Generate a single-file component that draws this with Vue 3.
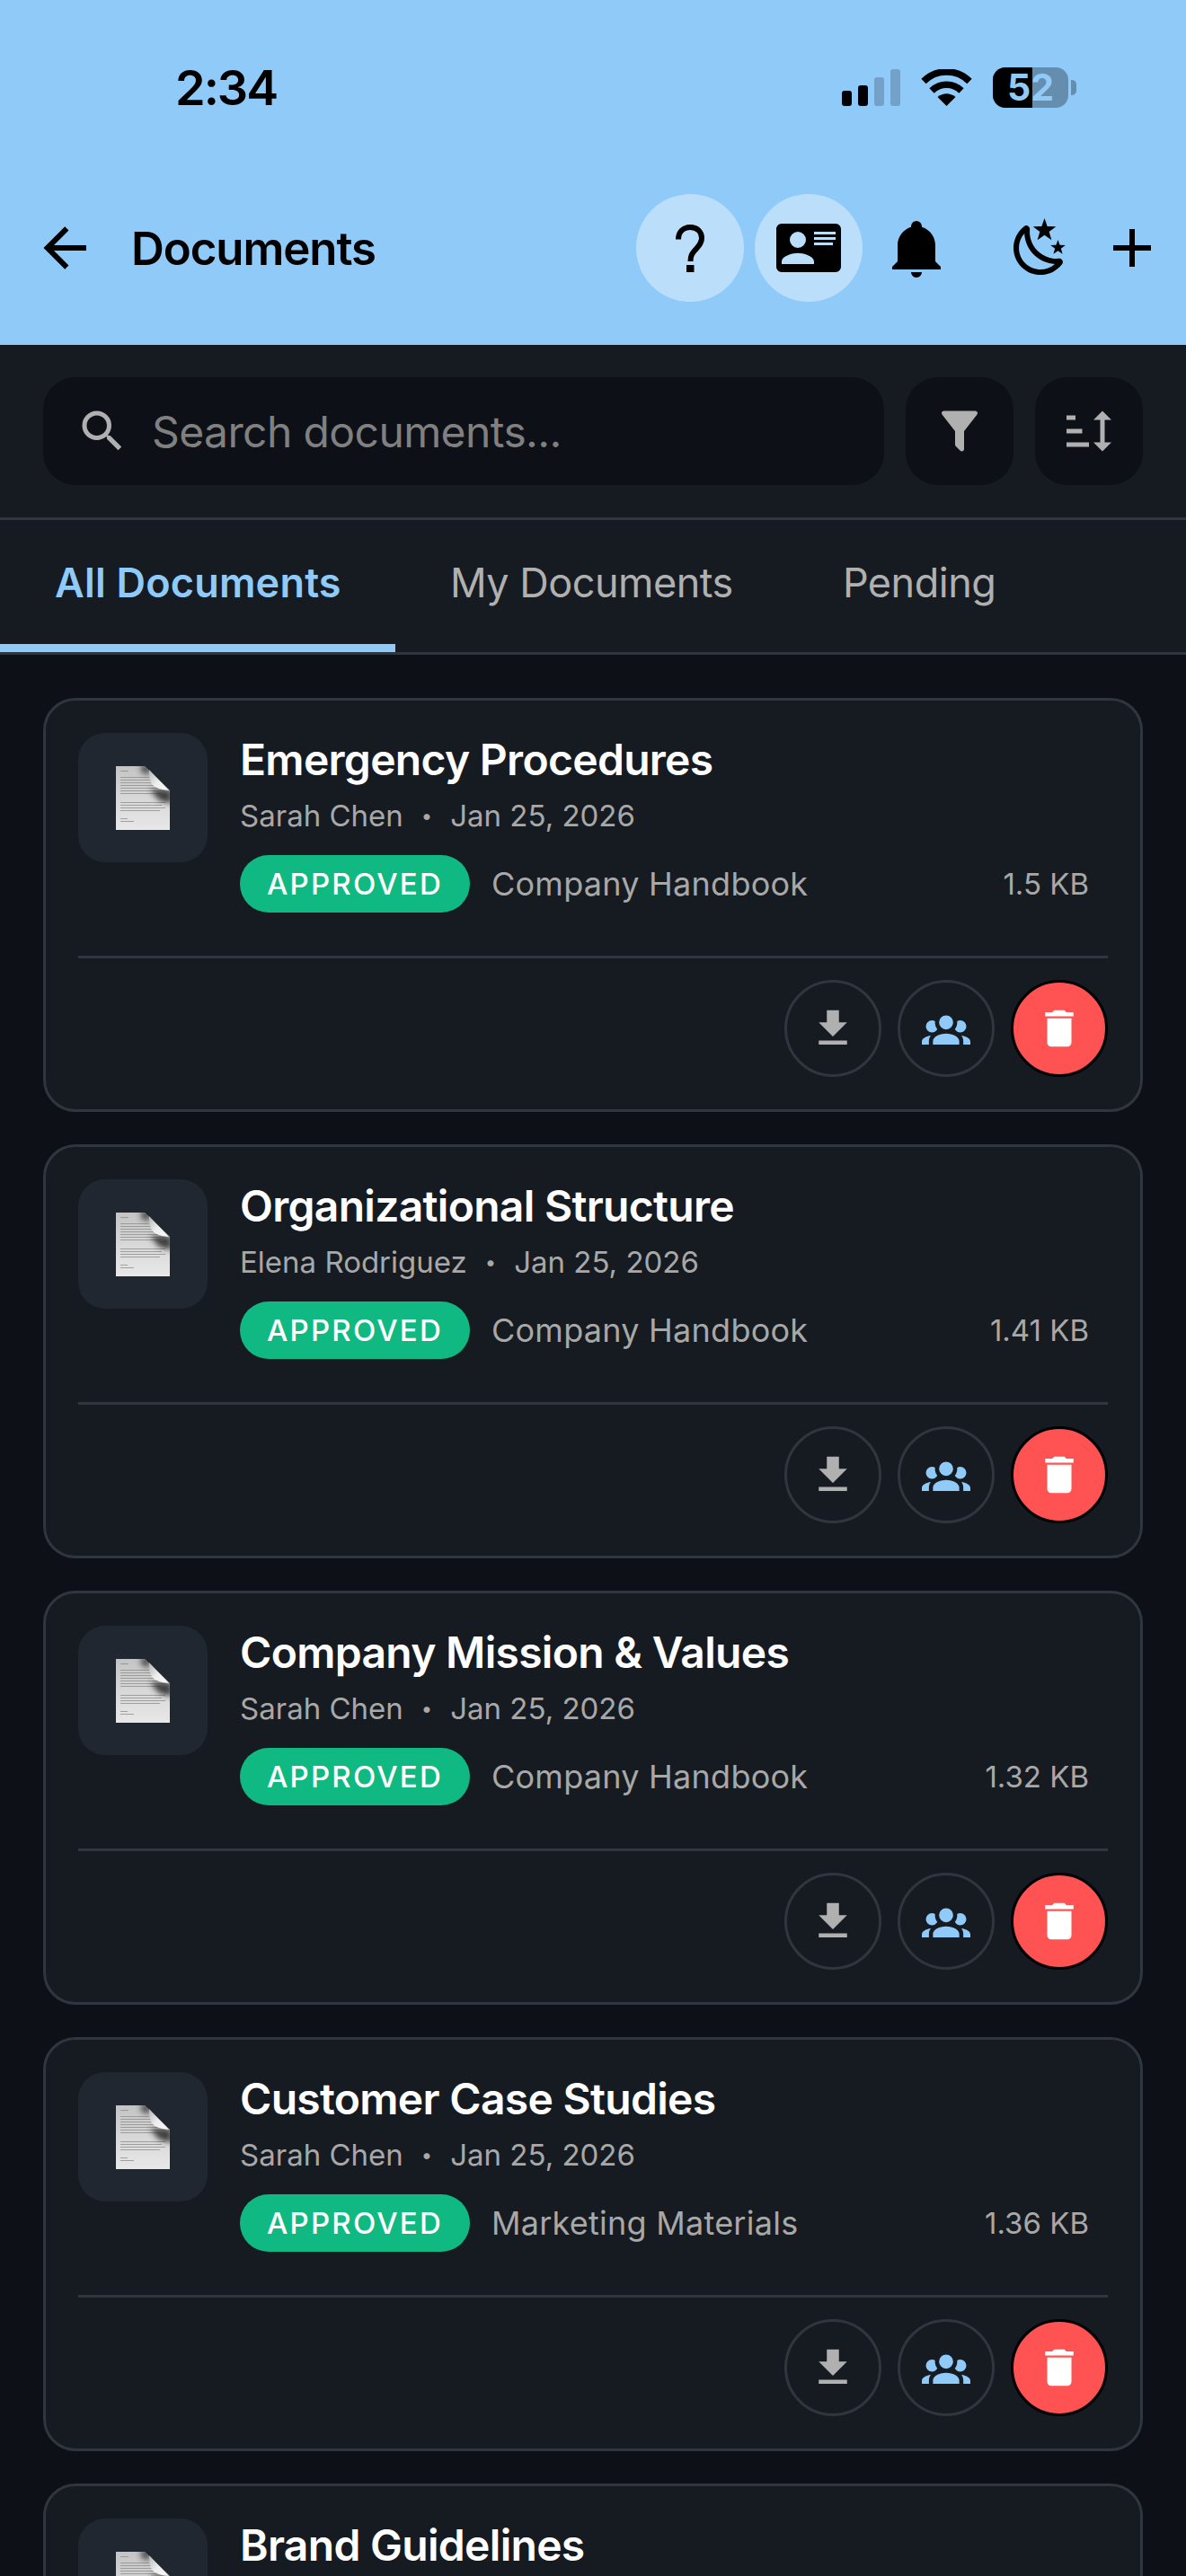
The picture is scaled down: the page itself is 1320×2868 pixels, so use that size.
<template>
  <div class="page">
    <header class="top">
      <div class="status">
        <span class="time">2:34</span>
        <div class="status-right">
          <div class="signal">
            <i class="b1"></i>
            <i class="b2"></i>
            <i class="b3 off"></i>
            <i class="b4 off"></i>
          </div>
          <svg class="wifi" viewBox="0 0 57 41" width="57" height="41">
            <path d="M3 13.5A36 36 0 0 1 54 13.5" fill="none" stroke="#000" stroke-width="7.5" />
            <path d="M12 24A23.5 23.5 0 0 1 45 24" fill="none" stroke="#000" stroke-width="7.5" />
            <path d="M28.5 41L18.5 31Q28.5 23.5 38.5 31Z" fill="#000" />
          </svg>
          <div class="battery">
            <div class="batt-body">
              <span class="batt-fill"></span>
              <span class="batt-text">52</span>
            </div>
            <span class="batt-cap"></span>
          </div>
        </div>
      </div>
      <div class="nav">
        <svg class="ic72" viewBox="0 0 24 24"><path :d="icons.back" /></svg>
        <h1>Documents</h1>
        <button class="round">
          <svg width="32" height="53" viewBox="0 0 32 53">
            <path d="M3 16.5C3 8 8.500 3 16 3C24 3 29 8 29 15C29 21 25.500 24 21.500 28.500C18 32.500 16.500 35 16.500 41" fill="none" stroke="#000" stroke-width="6" />
            <rect x="12" y="45" width="8.500" height="8" />
          </svg>
        </button>
        <button class="round">
          <svg class="ic72" viewBox="0 0 24 24"><path :d="icons.card" /></svg>
        </button>
        <svg class="ic72 bell" viewBox="0 0 24 24"><path :d="icons.bell" /></svg>
        <svg class="ic72 moon" viewBox="0 0 24 24"><path :d="icons.moon" /></svg>
        <svg class="ic72 plus" viewBox="0 0 24 24"><path :d="icons.plus" /></svg>
      </div>
    </header>

    <section class="search-row">
      <div class="search">
        <svg class="ic60" viewBox="0 0 24 24"><path :d="icons.search" /></svg>
        <span>Search documents...</span>
      </div>
      <button class="tool">
        <svg class="ic60" viewBox="0 0 24 24"><path :d="icons.filter" /></svg>
      </button>
      <button class="tool">
        <svg class="ic60" viewBox="0 0 24 24"><path :d="icons.sort" /></svg>
      </button>
    </section>

    <nav class="tabs">
      <div class="tab active">All Documents</div>
      <div class="tab">My Documents</div>
      <div class="tab">Pending</div>
    </nav>

    <main class="list">
      <article class="card" v-for="doc in docs" :key="doc.title">
        <div class="card-top">
          <div class="thumb">
            <svg width="60" height="71" viewBox="0 0 60 71">
              <defs>
                <linearGradient id="pageGrad" x1="0" y1="0" x2="0" y2="1">
                  <stop offset="0" stop-color="#c4c4c4" />
                  <stop offset="0.5" stop-color="#d8d8d8" />
                  <stop offset="1" stop-color="#e8e8e8" />
                </linearGradient>
                <linearGradient id="foldGrad" x1="0" y1="0" x2="1" y2="1">
                  <stop offset="0" stop-color="#b5b5b5" />
                  <stop offset="0.5" stop-color="#ededed" />
                  <stop offset="1" stop-color="#fafafa" />
                </linearGradient>
                <filter id="soft" x="-50%" y="-50%" width="200%" height="200%">
                  <feGaussianBlur stdDeviation="3" />
                </filter>
                <clipPath id="pageClip">
                  <path d="M0 0H32L60 27V71H0Z" />
                </clipPath>
              </defs>
              <path d="M0 0H32L60 27V71H0Z" fill="url(#pageGrad)" />
              <g fill="#8a8a8a" opacity="0.75">
                <rect x="5" y="5" width="9" height="1" />
                <rect v-for="l in lines" :key="l.y" x="5" :y="l.y" :width="l.w" height="1" />
              </g>
              <g clip-path="url(#pageClip)" filter="url(#soft)" fill="#2e2e2e">
                <path d="M28 -2H38V10L28 7Z" opacity="0.8" />
                <path d="M38 26H62V42L48 38Z" opacity="0.9" />
              </g>
              <path d="M37 4L59 27Q45 26 40 20Q37 14 37 4Z" fill="url(#foldGrad)" />
            </svg>
          </div>
          <div class="info">
            <div class="title">{{ doc.title }}</div>
            <div class="meta">
              <span>{{ doc.author }}</span>
              <span class="dot">•</span>
              <span>{{ doc.date }}</span>
            </div>
            <div class="tags">
              <span class="badge">APPROVED</span>
              <span class="cat">{{ doc.category }}</span>
              <span class="size">{{ doc.size }}</span>
            </div>
          </div>
        </div>
        <div class="actions">
          <button class="act">
            <svg class="ic54" viewBox="0 0 24 24"><path :d="icons.download" /></svg>
          </button>
          <button class="act blue">
            <svg class="ic54" viewBox="0 0 24 24"><path :d="icons.group" /></svg>
          </button>
          <button class="act del">
            <svg class="ic54" viewBox="0 0 24 24"><path :d="icons.trash" /></svg>
          </button>
        </div>
      </article>
    </main>
  </div>
</template>

<script setup>
const icons = {
  back: 'M20,11V13H8L13.5,18.5L12.08,19.92L4.16,12L12.08,4.08L13.5,5.5L8,11H20Z',
  card: 'M2,3H22C23.05,3 24,3.95 24,5V19C24,20.05 23.05,21 22,21H2C0.95,21 0,20.05 0,19V5C0,3.95 0.95,3 2,3M14,6V7H22V6H14M14,8V9H21.5L22,9V8H14M14,10V11H21V10H14M8,13.91C6,13.91 2,15 2,17V18H14V17C14,15 10,13.91 8,13.91M8,6A3,3 0 0,0 5,9A3,3 0 0,0 8,12A3,3 0 0,0 11,9A3,3 0 0,0 8,6Z',
  bell: 'M21,19V20H3V19L5,17V11C5,7.9 7.03,5.17 10,4.29C10,4.19 10,4.1 10,4A2,2 0 0,1 12,2A2,2 0 0,1 14,4C14,4.1 14,4.19 14,4.29C16.97,5.17 19,7.9 19,11V17L21,19M14,21A2,2 0 0,1 12,23A2,2 0 0,1 10,21',
  moon: 'M17.75,4.09L15.22,6.03L16.13,9.09L13.5,7.28L10.87,9.09L11.78,6.03L9.25,4.09L12.44,4L13.5,1L14.56,4L17.75,4.09M21.25,11L19.61,12.25L20.2,14.23L18.5,13.06L16.8,14.23L17.39,12.25L15.75,11L17.81,10.95L18.5,9L19.19,10.95L21.25,11M18.97,15.95C19.8,15.87 20.69,17.05 20.16,17.8C19.84,18.25 19.5,18.67 19.08,19.07C15.17,23 8.84,23 4.94,19.07C1.03,15.17 1.03,8.83 4.94,4.93C5.34,4.53 5.76,4.17 6.21,3.85C6.96,3.32 8.14,4.21 8.06,5.04C7.79,7.9 8.75,10.87 10.95,13.06C13.14,15.26 16.1,16.22 18.97,15.95M17.33,17.97C14.5,17.81 11.7,16.64 9.53,14.5C7.36,12.31 6.2,9.5 6.04,6.68C3.23,9.82 3.34,14.64 6.35,17.66C9.37,20.67 14.19,20.78 17.33,17.97Z',
  plus: 'M19,13H13V19H11V13H5V11H11V5H13V11H19V13Z',
  search: 'M9.5,3A6.5,6.5 0 0,1 16,9.5C16,11.11 15.41,12.59 14.44,13.73L14.71,14H15.5L20.5,19L19,20.5L14,15.5V14.71L13.73,14.44C12.59,15.41 11.11,16 9.5,16A6.5,6.5 0 0,1 3,9.5A6.5,6.5 0 0,1 9.5,3M9.5,5C7,5 5,7 5,9.5C5,12 7,14 9.5,14C12,14 14,12 14,9.5C14,7 12,5 9.5,5Z',
  filter: 'M14,12V19.88C14.04,20.18 13.94,20.5 13.71,20.71C13.32,21.1 12.69,21.1 12.3,20.71L10.29,18.7C10.06,18.47 9.96,18.16 10,17.87V12H9.97L4.21,4.62C3.87,4.19 3.95,3.56 4.38,3.22C4.57,3.08 4.78,3 5,3V3H19V3C19.22,3 19.43,3.08 19.62,3.22C20.05,3.56 20.13,4.19 19.79,4.62L14.03,12H14Z',
  sort: 'M18 21L14 17H17V7H14L18 3L22 7H19V17H22M2 19V17H12V19M2 13V11H9V13M2 7V5H6V7H2Z',
  download: 'M5,20H19V18H5M19,9H15V3H9V9H5L12,16L19,9Z',
  group: 'M12,5.5A3.5,3.5 0 0,1 15.5,9A3.5,3.5 0 0,1 12,12.5A3.5,3.5 0 0,1 8.5,9A3.5,3.5 0 0,1 12,5.5M5,8C5.56,8 6.08,8.15 6.53,8.42C6.38,9.85 6.8,11.27 7.66,12.38C7.16,13.34 6.16,14 5,14A3,3 0 0,1 2,11A3,3 0 0,1 5,8M19,8A3,3 0 0,1 22,11A3,3 0 0,1 19,14C17.84,14 16.84,13.34 16.34,12.38C17.2,11.27 17.62,9.85 17.47,8.42C17.92,8.15 18.44,8 19,8M5.5,18.25C5.5,16.18 8.41,14.5 12,14.5C15.59,14.5 18.5,16.18 18.5,18.25V20H5.5V18.25M0,20V18.5C0,17.11 1.89,15.94 4.45,15.6C3.86,16.28 3.5,17.22 3.5,18.25V20H0M24,20H20.5V18.25C20.5,17.22 20.14,16.28 19.55,15.6C22.11,15.94 24,17.11 24,18.5V20Z',
  trash: 'M19,4H15.5L14.5,3H9.5L8.5,4H5V6H19M6,19A2,2 0 0,0 8,21H16A2,2 0 0,0 18,19V7H6V19Z',
}

const docs = [
  { title: 'Emergency Procedures', author: 'Sarah Chen', date: 'Jan 25, 2026', category: 'Company Handbook', size: '1.5 KB' },
  { title: 'Organizational Structure', author: 'Elena Rodriguez', date: 'Jan 25, 2026', category: 'Company Handbook', size: '1.41 KB' },
  { title: 'Company Mission & Values', author: 'Sarah Chen', date: 'Jan 25, 2026', category: 'Company Handbook', size: '1.32 KB' },
  { title: 'Customer Case Studies', author: 'Sarah Chen', date: 'Jan 25, 2026', category: 'Marketing Materials', size: '1.36 KB' },
  { title: 'Brand Guidelines', author: 'Sarah Chen', date: 'Jan 25, 2026', category: 'Marketing Materials', size: '1.4 KB' },
]

// little lines of "writing" on the page icon
const lines = [
  { y: 12, w: 32 }, { y: 15, w: 36 }, { y: 18, w: 38 }, { y: 21, w: 45 }, { y: 24, w: 50 },
  { y: 27, w: 50 }, { y: 30, w: 44 }, { y: 40, w: 50 }, { y: 43, w: 46 }, { y: 46, w: 50 },
  { y: 49, w: 44 }, { y: 58, w: 8 }, { y: 61, w: 15 },
]
</script>

<style scoped>
.page {
  width: 1320px;
  height: 2868px;
  overflow: hidden;
  background: #0d1117;
  font-family: Inter, "Liberation Sans", sans-serif;
  color: #fff;
}
.top {
  height: 384px;
  background: #90caf9;
  color: #000;
}
.status {
  height: 194px;
  margin-bottom: 22px;
  padding: 0 122px 0 195px;
  display: flex;
  align-items: center;
  justify-content: space-between;
  box-sizing: border-box;
}
.time {
  font-size: 54px;
  font-weight: 600;
  letter-spacing: -2px;
}
.status-right {
  display: flex;
  align-items: center;
  gap: 23px;
}
.signal {
  display: flex;
  align-items: flex-end;
  gap: 7px;
  height: 41px;
}
.signal i {
  display: block;
  width: 11px;
  background: #000;
  border-radius: 3px;
}
.signal .b1 { height: 17px; }
.signal .b2 { height: 23px; }
.signal .b3 { height: 32px; }
.signal .b4 { height: 41px; }
.signal .off { background: rgba(0, 0, 0, 0.2); }
.battery {
  display: flex;
  align-items: center;
  gap: 3px;
}
.batt-body {
  position: relative;
  width: 84px;
  height: 45px;
  border-radius: 14px;
  overflow: hidden;
  background: rgba(0, 0, 0, 0.3);
  display: flex;
  align-items: center;
  justify-content: center;
}
.batt-fill {
  position: absolute;
  left: 0;
  top: 0;
  bottom: 0;
  width: 44px;
  background: #000;
}
.batt-text {
  position: relative;
  font-size: 41px;
  line-height: 45px;
  font-weight: 700;
  color: #90caf9;
}
.batt-cap {
  width: 6px;
  height: 17px;
  border-radius: 0 5px 5px 0;
  background: rgba(0, 0, 0, 0.3);
}
.nav {
  height: 120px;
  display: flex;
  align-items: center;
  padding-left: 36px;
}
.nav h1 {
  margin: 0 0 0 38px;
  flex: 1;
  font-size: 51px;
  font-weight: 600;
  letter-spacing: -1.1px;
}
.round {
  width: 120px;
  height: 120px;
  margin-right: 12px;
  padding: 0;
  border: none;
  border-radius: 50%;
  background: #bbdefb;
  display: flex;
  align-items: center;
  justify-content: center;
}
.bell { margin-left: 12px; }
.moon { margin-left: 66px; }
.plus { margin-left: 30px; margin-right: 24px; }
.ic72 { width: 72px; height: 72px; flex: none; }
.ic60 { width: 60px; height: 60px; flex: none; fill: #b0b0b0; }
.ic54 { width: 54px; height: 54px; flex: none; fill: #b0b0b0; }

.search-row {
  box-sizing: border-box;
  height: 195px;
  padding: 36px 48px;
  display: flex;
  gap: 24px;
  background: #161b22;
  border-bottom: 3px solid #30363d;
}
.search {
  flex: 1;
  height: 120px;
  box-sizing: border-box;
  padding-left: 36px;
  display: flex;
  align-items: center;
  gap: 25px;
  background: #0d1117;
  border-radius: 36px;
  font-size: 48px;
  letter-spacing: -0.6px;
  color: #808080;
}
.tool {
  width: 120px;
  height: 120px;
  padding: 0;
  border: none;
  border-radius: 36px;
  background: #0d1117;
  display: flex;
  align-items: center;
  justify-content: center;
}
.tabs {
  height: 150px;
  box-sizing: border-box;
  display: flex;
  background: #161b22;
  border-bottom: 3px solid #30363d;
}
.tab {
  padding: 0 61px;
  height: 147px;
  box-sizing: border-box;
  display: flex;
  align-items: center;
  font-size: 45px;
  letter-spacing: -0.5px;
  color: #b0b0b0;
  border-bottom: 9px solid transparent;
}
.tab.active {
  width: 440px;
  font-weight: 600;
  letter-spacing: 0.2px;
  color: #90caf9;
  border-bottom-color: #90caf9;
  white-space: nowrap;
}
.list {
  padding: 48px 48px 0;
  display: flex;
  flex-direction: column;
  gap: 36px;
}
.card {
  height: 461px;
  flex: none;
  box-sizing: border-box;
  padding: 36px;
  background: #161b22;
  border: 3px solid #30363d;
  border-radius: 36px;
}
.card-top {
  display: flex;
  gap: 36px;
  height: 248px;
  border-bottom: 3px solid #30363d;
}
.thumb {
  width: 144px;
  height: 144px;
  flex: none;
  border-radius: 30px;
  background: #202731;
  display: flex;
  align-items: center;
  justify-content: center;
}
.info {
  flex: 1;
  min-width: 0;
}
.title {
  font-size: 48px;
  font-weight: 600;
  letter-spacing: -0.7px;
  line-height: 60px;
}
.meta {
  margin-top: 11px;
  display: flex;
  align-items: center;
  font-size: 33px;
  line-height: 42px;
  color: #a8a8a8;
}
.dot {
  margin: 0 20px;
  font-size: 22px;
}
.tags {
  margin-top: 23px;
  display: flex;
  align-items: center;
}
.badge {
  height: 64px;
  box-sizing: border-box;
  padding: 0 30px;
  display: flex;
  align-items: center;
  border-radius: 32px;
  background: #10b981;
  color: #fff;
  font-size: 33px;
  font-weight: 500;
  letter-spacing: 2.2px;
}
.cat {
  margin-left: 24px;
  font-size: 36px;
  letter-spacing: 0.25px;
  color: #a8a8a8;
}
.size {
  margin-left: auto;
  margin-right: 21px;
  font-size: 33px;
  color: #a8a8a8;
}
.actions {
  margin-top: 24px;
  display: flex;
  justify-content: flex-end;
  gap: 18px;
}
.act {
  width: 108px;
  height: 108px;
  box-sizing: border-box;
  padding: 0;
  border: 3px solid #30363d;
  border-radius: 50%;
  background: transparent;
  display: flex;
  align-items: center;
  justify-content: center;
}
.act.blue svg { fill: #90caf9; }
.act.del {
  background: #ff5252;
  border-color: #000;
}
.act.del svg { fill: #fff; }
</style>
<style>
html, body { margin: 0; background: #0d1117; }
</style>
